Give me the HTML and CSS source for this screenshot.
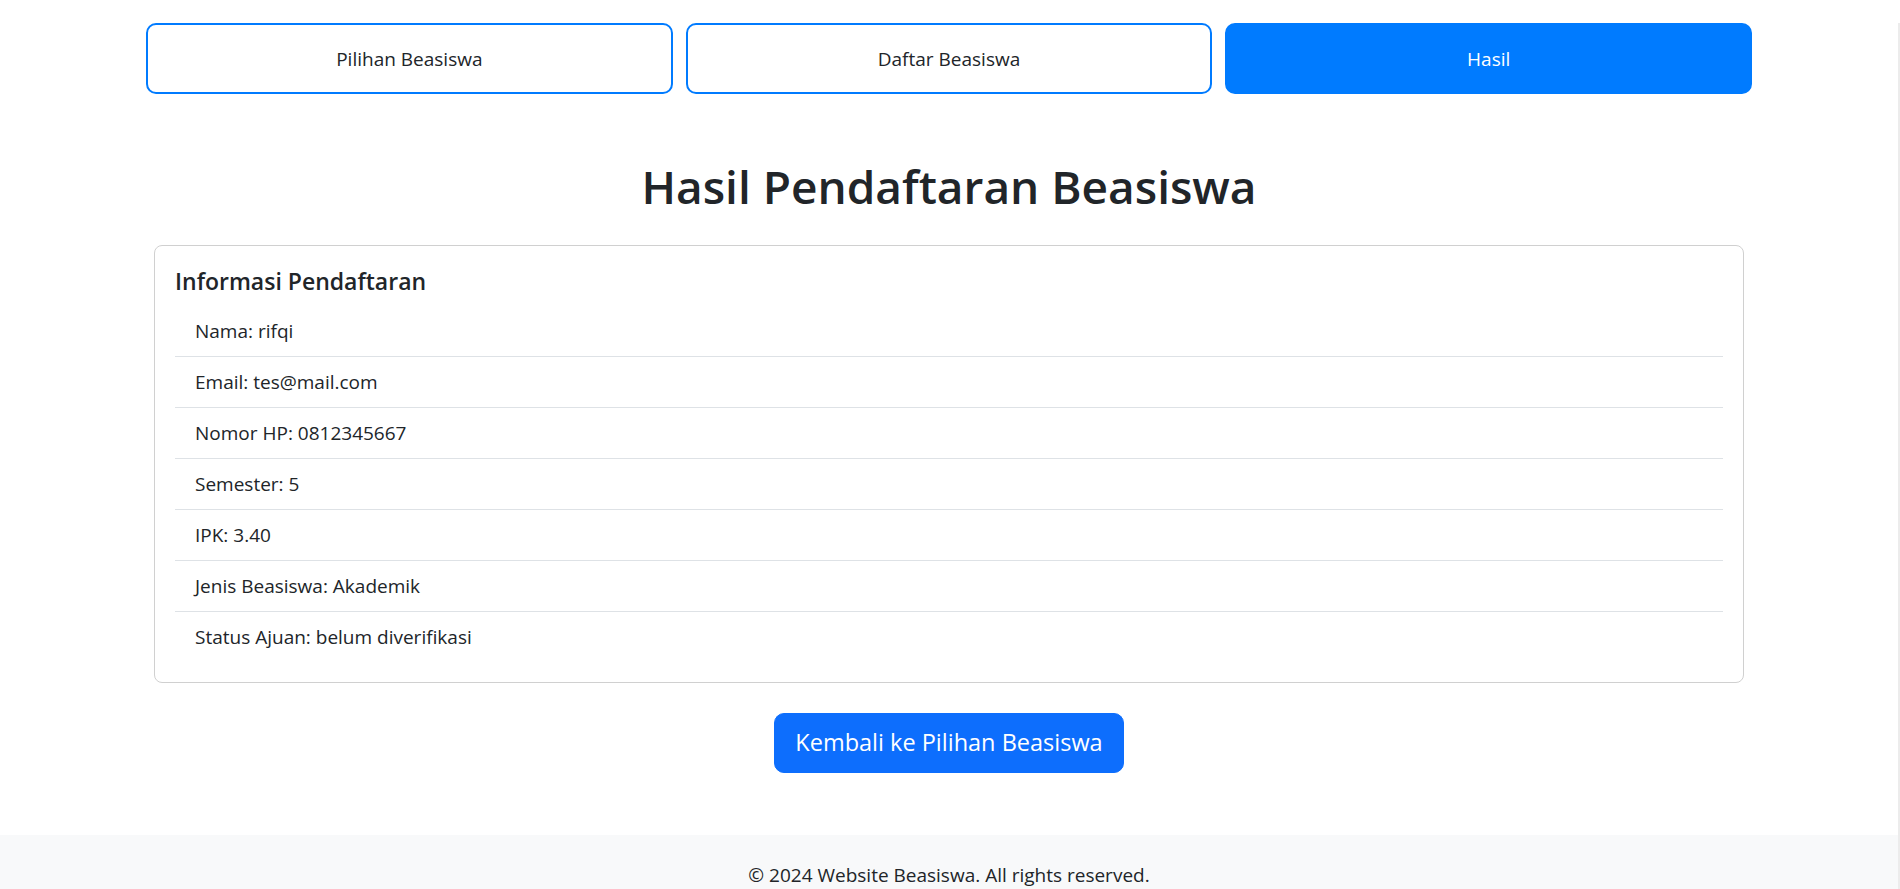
FILE: index.html
```html
<!DOCTYPE html>
<html lang="id">
<head>
<meta charset="utf-8">
<title>Hasil Pendaftaran Beasiswa</title>
<link rel="stylesheet" href="styles.css">
</head>
<body>
<div class="page">
  <nav class="tabs">
    <a class="tab" href="#">Pilihan Beasiswa</a>
    <a class="tab" href="#">Daftar Beasiswa</a>
    <a class="tab tab-active" href="#">Hasil</a>
  </nav>

  <main class="content">
    <h1 class="title">Hasil Pendaftaran Beasiswa</h1>
    <section class="card">
      <div class="card-body">
        <h5 class="card-title">Informasi Pendaftaran</h5>
        <ul class="list">
          <li class="list-item">Nama: rifqi</li>
          <li class="list-item">Email: tes@mail.com</li>
          <li class="list-item">Nomor HP: 0812345667</li>
          <li class="list-item">Semester: 5</li>
          <li class="list-item">IPK: 3.40</li>
          <li class="list-item">Jenis Beasiswa: Akademik</li>
          <li class="list-item">Status Ajuan: belum diverifikasi</li>
        </ul>
      </div>
    </section>
    <div class="actions">
      <a class="btn-back" href="#">Kembali ke Pilihan Beasiswa</a>
    </div>
  </main>

  <footer class="footer">
    <p class="footer-text">© 2024 Website Beasiswa. All rights reserved.</p>
  </footer>
</div>
</body>
</html>
```
FILE: styles.css
```css
* { box-sizing: border-box; }

html, body {
  margin: 0;
  padding: 0;
  background: #fff;
}

body {
  font-family: "Open Sans", "Noto Sans", "Liberation Sans", sans-serif;
  font-size: 20px;
  line-height: 30px;
  color: #212529;
  overflow: hidden;
}

.page {
  border-right: 2px solid #ececec;
  min-height: 889px;
}

.tabs {
  display: flex;
  gap: 13px;
  width: 1606px;
  margin: 23px auto 0;
}

.tab {
  flex: 1;
  height: 71px;
  display: flex;
  align-items: center;
  justify-content: center;
  border: 2px solid #007bff;
  border-radius: 10px;
  background: #fff;
  color: #212529;
  text-decoration: none;
  font-size: 19px;
  padding-top: 1px;
}

.tab-active {
  background: #007bff;
  color: #fff;
}

.content {
  width: 1590px;
  margin: 0 auto;
}

.title {
  margin: 62px 0 29px;
  text-align: center;
  font-size: 46px;
  line-height: 60px;
  font-weight: 600;
  color: #212529;
}

.card {
  border: 1px solid #d0d0d0;
  border-radius: 8px;
  background: #fff;
}

.card-body {
  padding: 20px;
}

.card-title {
  margin: 0 0 10px;
  font-size: 23px;
  line-height: 30px;
  font-weight: 600;
}

.list {
  list-style: none;
  margin: 0;
  padding: 0;
}

.list-item {
  padding: 10px 20px;
  font-size: 19px;
  line-height: 30px;
  border-bottom: 1px solid #dee2e6;
}

.list-item:last-child {
  border-bottom: 0;
}

.actions {
  display: flex;
  justify-content: center;
  margin-top: 30px;
}

.btn-back {
  display: inline-block;
  padding: 10px 20px;
  border: 1px solid #0d6efd;
  border-radius: 10px;
  background: #0d6efd;
  color: #fff;
  font-size: 23.5px;
  line-height: 37.5px;
  text-decoration: none;
}

.footer {
  margin-top: 62px;
  height: 54px;
  overflow: hidden;
  background: #f8f9fa;
  padding-top: 25px;
  text-align: center;
}

.footer-text {
  margin: 0;
  font-size: 19px;
  line-height: 30px;
}
```
